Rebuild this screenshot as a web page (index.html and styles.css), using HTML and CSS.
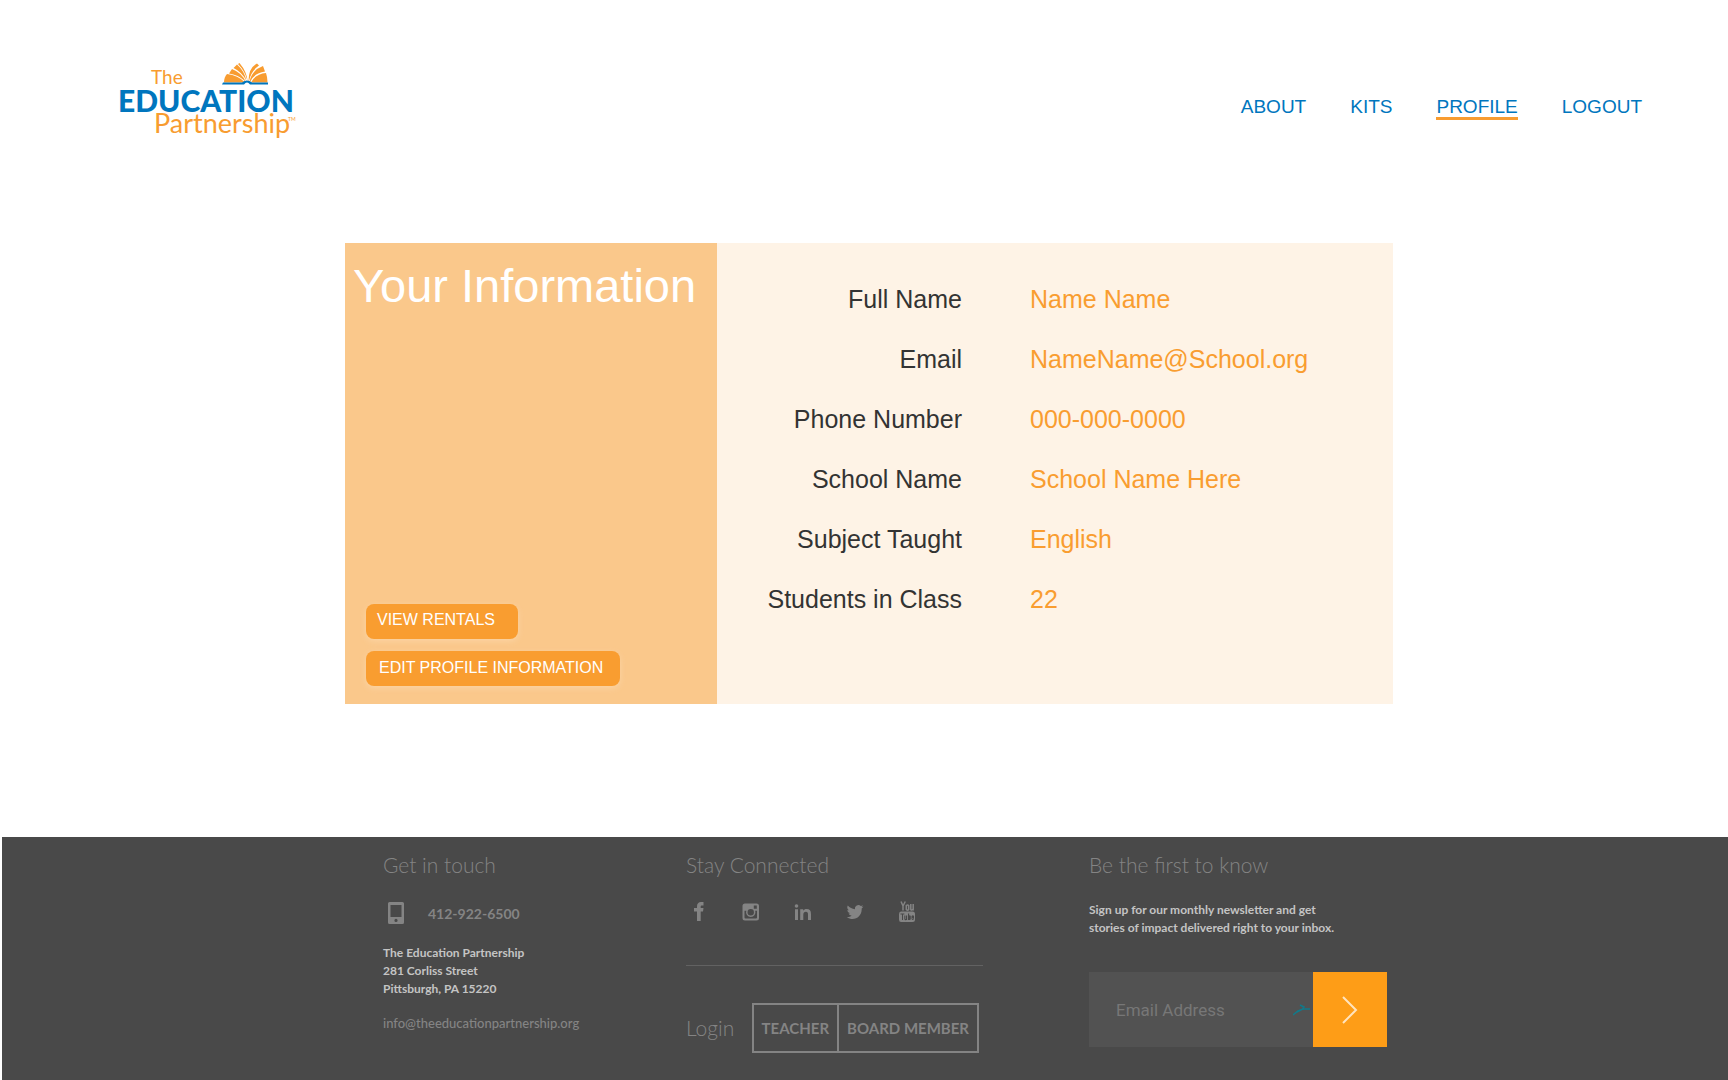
FILE: index.html
```html
<!DOCTYPE html>
<html lang="en">
<head>
<meta charset="utf-8">
<meta name="viewport" content="width=device-width, initial-scale=1">
<title>Profile - The Education Partnership</title>
<link rel="stylesheet" href="styles.css">
</head>
<body>
<header class="site-header">
  <a class="logo" href="#" aria-label="The Education Partnership home">
    <svg width="180" height="80" viewBox="0 0 180 80">
      <text class="logo-light" x="31" y="24" font-size="19">The</text>
      <text class="logo-bold" x="-2" y="52" font-size="30">EDUCATION</text>
      <text class="logo-light" x="34" y="73" font-size="27">Partnership</text>
      <text class="logo-light" x="168" y="61" font-size="5">TM</text>
      <g fill="#f89c30">
        <path d="M104 22.500Q104 17 107 14Q118 15 125 22.500Z"/>
        <path d="M109 13.500 112 9Q122 13 125.500 21.500Q118 14.500 109 13.500Z"/>
        <path d="M113.500 8 117 4.500Q124.500 11 126.500 21Q122 12 113.500 8Z"/>
        <path d="M118 4 119.500 3Q127 12 127.500 21Q125 11 118 4Z"/>
        <path d="M128.500 21Q128.500 8 137 3.500L139 5.500Q131 11 129 21Z"/>
        <path d="M129.500 21.500Q132 10 143 6L145 11.500Q134 13 130 22Z"/>
        <path d="M131 22.500Q135 14 146 13Q147.500 17 147.500 22.500Z"/>
      </g>
      <path d="M102 24.500H124Q127 20.500 130 24.500H148V22.500H132Q127 18.500 122 22.500H103Z" fill="#0076be"/>
    </svg>
  </a>
  <nav class="main-nav" aria-label="Main">
    <a href="#">ABOUT</a>
    <a href="#">KITS</a>
    <a class="current" href="#" aria-current="page">PROFILE</a>
    <a href="#">LOGOUT</a>
  </nav>
</header>

<main class="page">
  <section class="profile">
    <div class="profile-side">
      <h1>Your Information</h1>
      <div class="actions">
        <button class="action" type="button">VIEW RENTALS</button>
        <button class="action wide" type="button">EDIT PROFILE INFORMATION</button>
      </div>
    </div>
    <dl class="details">
      <dt>Full Name</dt><dd>Name Name</dd>
      <dt>Email</dt><dd>NameName@School.org</dd>
      <dt>Phone Number</dt><dd>000-000-0000</dd>
      <dt>School Name</dt><dd>School Name Here</dd>
      <dt>Subject Taught</dt><dd>English</dd>
      <dt>Students in Class</dt><dd>22</dd>
    </dl>
  </section>
</main>

<footer class="site-footer">
  <div class="footer-grid">
    <section>
      <h2>Get in touch</h2>
      <p class="phone">
        <svg width="16" height="22" viewBox="0 0 16 22"><path fill="currentColor" fill-rule="evenodd" d="M1.500 0h13A1.500 1.500 0 0 1 16 1.500v19a1.500 1.500 0 0 1-1.500 1.500h-13A1.500 1.500 0 0 1 0 20.500v-19A1.500 1.500 0 0 1 1.500 0ZM2.500 3v12h11V3ZM8 16.800a1.600 1.600 0 1 0 0 3.200 1.600 1.600 0 0 0 0-3.200Z"/></svg>
        <a href="tel:4129226500">412-922-6500</a>
      </p>
      <address>The Education Partnership<br>281 Corliss Street<br>Pittsburgh, PA 15220</address>
      <a class="mail" href="mailto:info@theeducationpartnership.org">info@theeducationpartnership.org</a>
    </section>

    <section class="connect">
      <h2>Stay Connected</h2>
      <div class="social">
        <a href="#" aria-label="Facebook"><svg width="20" height="22" viewBox="0 0 20 22"><path fill="currentColor" d="M8 20v-9.500H5V7h3V5.500C8 2.500 9.500 1 12 1h2.500v3.500H13c-1 0-1.300.5-1.300 1.300V7h2.800l-.5 3.500h-2.300V20Z"/></svg></a>
        <a href="#" aria-label="Instagram"><svg width="20" height="22" viewBox="0 0 20 22"><path fill="currentColor" fill-rule="evenodd" d="M4 2.500h11.500A2.500 2.500 0 0 1 18 5v12a2.500 2.500 0 0 1-2.500 2.500H4A2.500 2.500 0 0 1 1.500 17V5A2.500 2.500 0 0 1 4 2.500ZM12.800 4.500v3.200h3V4.500ZM3.500 9.700V16.500q0 1 1 1h10.500q1 0 1-1V9.700h-1.800a4.700 4.700 0 1 1-8.900 0ZM9.750 8a3.200 3.200 0 1 0 0 6.400 3.200 3.200 0 0 0 0-6.400Z"/></svg></a>
        <a href="#" aria-label="LinkedIn"><svg width="20" height="22" viewBox="0 0 20 22"><g fill="currentColor"><circle cx="3.500" cy="5" r="1.800"/><path d="M2 8.200h3V19H2ZM7.200 8.200h3v1.500C11 8.500 12 8 13.600 8c3.200 0 4.400 1.800 4.400 5v6h-3v-5.500c0-1.800-.5-2.800-2-2.800-1.800 0-2.700 1.100-2.700 3V19H7.200Z"/></g></svg></a>
        <a href="#" aria-label="Twitter"><svg width="20" height="22" viewBox="0 0 20 22"><path fill="currentColor" d="M18.500 5.500q-1 .5-2 .6 1-.7 1.500-1.800-1 .6-2.200.8A3.500 3.500 0 0 0 9.900 8.200Q5.700 8 2.800 4.600q-1.500 2.800 1 4.700-.8 0-1.500-.4 0 2.700 2.700 3.400-.7.200-1.500.1.700 2 3.200 2.400-2 1.600-5 1.400C9 20.700 16.700 16 16.700 8.200v-.7q1-.8 1.800-2Z"/></svg></a>
        <a href="#" aria-label="YouTube"><svg width="20" height="22" viewBox="0 0 20 22"><path fill="none" stroke="currentColor" stroke-width="1.500" d="M4 .5 6 5v4.500M8.300.5 6 5M9.300 4.500q1.300-1.200 2.400 0v4q-1.100 1.300-2.400 0ZM13.800 3v5.500q.8 1.300 2.400-.5V3v6.500"/><path fill="currentColor" fill-rule="evenodd" d="M4 10.500h11.500Q18 10.500 18 13v5.500Q18 21 15.500 21H4Q2 21 2 18.500V13Q2 10.500 4 10.500ZM3.500 12.500v1H5V19h1v-5.500h1.300v-1ZM7.300 14.500V18q.5 1.800 2 1h.8v-4.500H9V18H8.400v-3.500ZM11 12.500V19h2q.8-.5.800-1.500V15q-.5-1-1.700-.5v-2ZM14.500 15v3q1.200 2 2.500 0v-.8h-1v.8h-.5v-1H17v-2q-1-1.500-2.500 0Z"/></svg></a>
      </div>
      <div class="login">
        <h2>Login</h2>
        <div class="login-buttons">
          <button type="button">TEACHER</button>
          <button type="button">BOARD MEMBER</button>
        </div>
      </div>
    </section>

    <section>
      <h2>Be the first to know</h2>
      <p class="pitch">Sign up for our monthly newsletter and get<br>stories of impact delivered right to your inbox.</p>
      <form class="signup">
        <input type="email" placeholder="Email Address" aria-label="Email Address">
        <svg class="mark" width="18" height="12" viewBox="0 0 18 12"><path fill="none" stroke="#117a8b" stroke-width="1.500" d="M0 11 5 7 10 5H17M7 1 11 3 9 5.500 4 8"/></svg>
        <button type="button" aria-label="Subscribe"><svg width="16" height="28" viewBox="0 0 16 28"><path fill="none" stroke="#ffe4bf" stroke-width="2" d="M1 1 14 14 1 27"/></svg></button>
      </form>
    </section>
  </div>
</footer>
</body>
</html>
```
FILE: styles.css
```css
* {
  box-sizing: border-box;
}

body {
  margin: 0;
  background: #fff;
  font-family: "Liberation Sans", Arial, sans-serif;
}

h1, h2, p, dl, dd {
  margin: 0;
  font-weight: 400;
}

a {
  color: inherit;
  text-decoration: none;
}

button {
  font: inherit;
  cursor: pointer;
}

svg {
  display: block;
}

/* Header */
.site-header {
  display: flex;
  justify-content: space-between;
  align-items: flex-start;
  padding: 60px 86px 0 120px;
}

.logo svg {
  overflow: visible;
}

.logo-light {
  fill: #f89c30;
  font-family: Lato, sans-serif;
}

.logo-bold {
  fill: #0076be;
  font-family: Lato, sans-serif;
  font-weight: 900;
}

.main-nav {
  display: flex;
  gap: 44px;
  padding-top: 36px;
  color: #0076be;
  font-size: 19px;
  line-height: 21px;
}

.current {
  border-bottom: 3px solid #f89c30;
}

/* Profile card */
.page {
  padding: 103px 0 133px 10px;
}

.profile {
  display: flex;
  max-width: 1048px;
  min-height: 461px;
  margin: 0 auto;
  background: #fef3e6;
}

.profile-side {
  display: flex;
  flex-direction: column;
  justify-content: space-between;
  flex: 0 0 372px;
  padding: 15px 8px 18px;
  background: #fac88b;
}

h1 {
  color: #fff;
  font-size: 47px;
  line-height: 56px;
  white-space: nowrap;
}

.actions {
  display: flex;
  flex-direction: column;
  align-items: flex-start;
  gap: 12px;
  padding-left: 13px;
}

.action {
  height: 35px;
  padding: 0 23px 4px 11px;
  border: 0;
  border-radius: 8px;
  background: #f99d30;
  box-shadow: 0 2px 6px rgba(255, 230, 200, 0.4);
  color: #fff;
  font-size: 16px;
}

.action.wide {
  padding: 0 17px 2px 13px;
}

.details {
  display: grid;
  grid-template-columns: 245px 1fr;
  grid-auto-rows: 60px;
  align-items: center;
  column-gap: 68px;
  flex: 1;
  padding-top: 26px;
  font-size: 25px;
}

dt {
  color: #333;
  text-align: right;
}

dd {
  color: #f99d30;
}

/* Footer */
.site-footer {
  margin-left: 2px;
  padding: 13px 0 27px 40px;
  background: #494949;
  color: #848484;
  font-family: Lato, sans-serif;
}

.footer-grid {
  display: grid;
  grid-template-columns: 303px 403px 298px;
  max-width: 1004px;
  margin: 0 auto;
}

h2 {
  font-size: 21px;
  font-weight: 300;
  line-height: 30px;
}

.phone {
  display: flex;
  align-items: center;
  gap: 24px;
  padding: 22px 0 0 5px;
  font-size: 14px;
  font-weight: 700;
}

address {
  margin-top: 20px;
  color: #c4c4c4;
  font-size: 12px;
  font-style: normal;
  font-weight: 700;
  line-height: 18px;
}

.mail {
  display: block;
  margin-top: 15px;
  font-size: 13px;
  font-weight: 500;
  line-height: 20px;
}

.connect {
  padding-right: 106px;
}

.social {
  display: flex;
  gap: 32px;
  padding: 21px 0 42px 3px;
  border-bottom: 1px solid #626262;
}

.login {
  display: flex;
  align-items: center;
  justify-content: space-between;
  padding: 37px 4px 0 0;
}

.login-buttons {
  display: flex;
}

.login-buttons button {
  height: 50px;
  padding: 0 8px;
  border: 2px solid #848484;
  background: transparent;
  color: #848484;
  font-size: 15px;
  font-weight: 700;
}

.login-buttons button + button {
  border-left: 0;
}

.pitch {
  padding-top: 21px;
  color: #c4c4c4;
  font-size: 12px;
  font-weight: 700;
  line-height: 18px;
  white-space: nowrap;
}

.signup {
  display: flex;
  position: relative;
  height: 75px;
  margin-top: 35px;
}

.signup input {
  flex: 1;
  min-width: 0;
  padding: 0 27px;
  border: 0;
  background: #525252;
  color: #ccc;
  font-family: Roboto, sans-serif;
  font-size: 17px;
}

.signup input::placeholder {
  color: #777;
  opacity: 1;
}

.mark {
  position: absolute;
  top: 32px;
  right: 76px;
}

.signup button {
  display: grid;
  place-items: center;
  width: 74px;
  padding: 0;
  border: 0;
  background: #fe9d17;
}
```
